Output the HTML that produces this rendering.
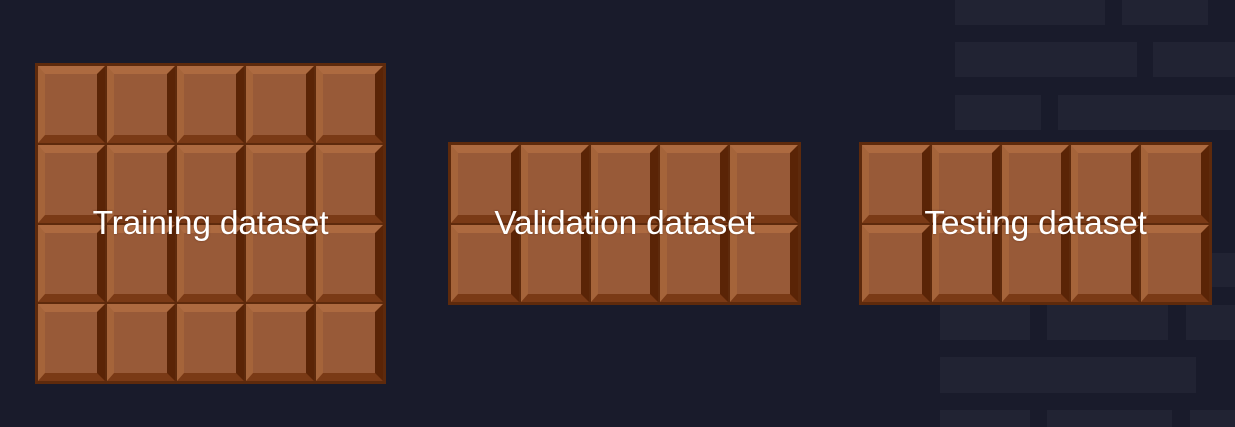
<!DOCTYPE html>
<html><head><style>
body{margin:0;width:1235px;height:427px;background:#191b2b;position:relative;overflow:hidden;font-family:"Liberation Sans",sans-serif}
.b{position:absolute;background:#212333}
.bar{position:absolute;background:#5e2a0c;display:grid;padding:2px;box-sizing:border-box;gap:0}
.c{box-sizing:border-box;border-style:solid;border-width:8px 8px 8px 7px;border-color:#ad6a40 #5a2406 #7a3a16 #a5643a;background:#985a38;margin:1px}
.t{position:absolute;color:#fff;font-size:33.5px;text-align:center;line-height:1;letter-spacing:-0.2px;text-shadow:0 0 2px rgba(60,20,0,.4)}
</style></head><body>
<div class="b" style="left:955px;top:0;width:150px;height:25px"></div>
<div class="b" style="left:1122px;top:0;width:86px;height:25px"></div>
<div class="b" style="left:955px;top:42px;width:182px;height:35px"></div>
<div class="b" style="left:1153px;top:42px;width:82px;height:35px"></div>
<div class="b" style="left:955px;top:95px;width:86px;height:35px"></div>
<div class="b" style="left:1058px;top:95px;width:177px;height:35px"></div>
<div class="b" style="left:1212px;top:253px;width:23px;height:34px"></div>
<div class="b" style="left:940px;top:305px;width:90px;height:35px"></div>
<div class="b" style="left:1047px;top:305px;width:121px;height:35px"></div>
<div class="b" style="left:1186px;top:305px;width:49px;height:35px"></div>
<div class="b" style="left:940px;top:357px;width:256px;height:36px"></div>
<div class="b" style="left:940px;top:410px;width:90px;height:17px"></div>
<div class="b" style="left:1047px;top:410px;width:125px;height:17px"></div>
<div class="b" style="left:1190px;top:410px;width:45px;height:17px"></div>

<div class="bar" style="left:35px;top:63px;width:351px;height:321px;grid-template-columns:repeat(5,1fr);grid-template-rows:repeat(4,1fr)">
<div class="c"></div><div class="c"></div><div class="c"></div><div class="c"></div><div class="c"></div>
<div class="c"></div><div class="c"></div><div class="c"></div><div class="c"></div><div class="c"></div>
<div class="c"></div><div class="c"></div><div class="c"></div><div class="c"></div><div class="c"></div>
<div class="c"></div><div class="c"></div><div class="c"></div><div class="c"></div><div class="c"></div>
</div>
<div class="bar" style="left:448px;top:142px;width:353px;height:163px;grid-template-columns:repeat(5,1fr);grid-template-rows:repeat(2,1fr)">
<div class="c"></div><div class="c"></div><div class="c"></div><div class="c"></div><div class="c"></div>
<div class="c"></div><div class="c"></div><div class="c"></div><div class="c"></div><div class="c"></div>
</div>
<div class="bar" style="left:859px;top:142px;width:353px;height:163px;grid-template-columns:repeat(5,1fr);grid-template-rows:repeat(2,1fr)">
<div class="c"></div><div class="c"></div><div class="c"></div><div class="c"></div><div class="c"></div>
<div class="c"></div><div class="c"></div><div class="c"></div><div class="c"></div><div class="c"></div>
</div>
<div class="t" style="left:35px;width:351px;top:207px">Training dataset</div>
<div class="t" style="left:448px;width:353px;top:207px">Validation dataset</div>
<div class="t" style="left:859px;width:353px;top:207px">Testing dataset</div>
</body></html>
